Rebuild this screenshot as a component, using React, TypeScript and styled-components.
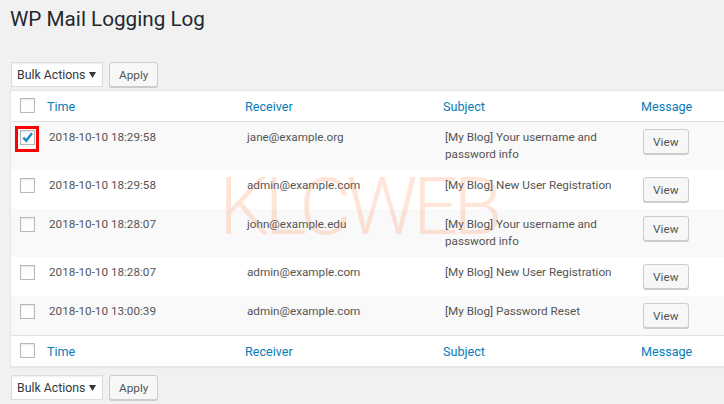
import React from 'react';
import styled, { createGlobalStyle } from 'styled-components';

const GlobalStyle = createGlobalStyle`
  html, body {
    margin: 0;
    padding: 0;
    background: #f1f1f1;
    overflow: hidden;
  }
  body {
    font-family: Roboto, "Liberation Sans", sans-serif;
    color: #555;
  }
`;

const Page = styled.div`
  box-sizing: border-box;
  width: 724px;
  height: 404px;
  padding: 5px 0 0 10px;
`;

const Title = styled.h1`
  margin: 0;
  font-size: 20.7px;
  line-height: 29px;
  font-weight: 400;
  color: #23282d;
`;

const TableNav = styled.div<{ top?: boolean }>`
  display: flex;
  gap: 6px;
  margin: ${({ top }) => (top ? '28px 0 3px 1px' : '8px 0 0 1px')};
`;

const Select = styled.div`
  box-sizing: border-box;
  display: flex;
  align-items: center;
  justify-content: space-between;
  width: 92px;
  height: 25px;
  padding: 0 6px 0 5px;
  background: #fff;
  border: 1px solid #ddd;
  box-shadow: inset 0 1px 2px rgba(0, 0, 0, 0.07);
  font-size: 12.3px;
  color: #32373c;
`;

const Button = styled.button`
  box-sizing: border-box;
  display: block;
  height: 25px;
  padding: 0 9px;
  background: #f7f7f7;
  border: 1px solid #ccc;
  border-radius: 3px;
  box-shadow: 0 1px 0 #ccc;
  font-family: Roboto, "Liberation Sans", sans-serif;
  font-size: 11.8px;
  color: #555;
  cursor: pointer;
`;

const Table = styled.div`
  position: relative;
  width: 730px;
  background: #fff;
  border: 1px solid #e5e5e5;
  box-shadow: 0 1px 1px rgba(0, 0, 0, 0.04);
  overflow: hidden;
`;

const Row = styled.div<{ striped?: boolean; head?: boolean; foot?: boolean }>`
  display: grid;
  grid-template-columns: 26px 198px 198px 198px 1fr;
  background: ${({ striped }) => (striped ? '#f9f9f9' : '#fff')};
  border-bottom: ${({ head }) => (head ? '1px solid #e1e1e1' : 'none')};
  border-top: ${({ foot }) => (foot ? '1px solid #e1e1e1' : 'none')};
`;

const Cell = styled.div<{ head?: boolean }>`
  position: relative;
  padding: ${({ head }) => (head ? '7px 10px 6px 10px' : '7px 10px 7px 12px')};
  font-size: ${({ head }) => (head ? '12.6px' : '11.7px')};
  line-height: 17px;
  color: ${({ head }) => (head ? '#0a7cb8' : '#555')};
`;

const CheckCell = styled.div<{ head?: boolean }>`
  position: relative;
  padding: ${({ head }) => (head ? '7px' : '8px')} 0 0 9px;
`;

const Box = styled.span`
  box-sizing: border-box;
  display: flex;
  align-items: center;
  justify-content: center;
  width: 15px;
  height: 15px;
  background: #fff;
  border: 1px solid #b4b9be;
  box-shadow: inset 0 1px 2px rgba(0, 0, 0, 0.1);
`;

const Highlight = styled.span`
  position: absolute;
  left: 4px;
  top: 4px;
  width: 24px;
  height: 26px;
  box-sizing: border-box;
  border: 3px solid #f00;
`;

const Subject = styled.div`
  max-width: 175px;
`;

const Watermark = styled.div`
  position: absolute;
  left: 208px;
  top: 66px;
  font-size: 80px;
  line-height: 100px;
  font-weight: 300;
  letter-spacing: -5px;
  color: rgba(255, 120, 60, 0.2);
  pointer-events: none;
  white-space: nowrap;
`;

const logs = [
  { time: '2018-10-10 18:29:58', to: 'jane@example.org', subject: '[My Blog] Your username and password info', checked: true },
  { time: '2018-10-10 18:29:58', to: 'admin@example.com', subject: '[My Blog] New User Registration' },
  { time: '2018-10-10 18:28:07', to: 'john@example.edu', subject: '[My Blog] Your username and password info' },
  { time: '2018-10-10 18:28:07', to: 'admin@example.com', subject: '[My Blog] New User Registration' },
  { time: '2018-10-10 13:00:39', to: 'admin@example.com', subject: '[My Blog] Password Reset' },
];

const Check = ({ checked }: { checked?: boolean }) => (
  <Box>
    {checked && (
      <svg width="13" height="13" viewBox="0 0 13 13">
        <path d="M2.3 6.6 L5.2 9.6 L11 2.2" fill="none" stroke="#1e8cbe" strokeWidth="2.4" />
      </svg>
    )}
  </Box>
);

const Nav = ({ top }: { top?: boolean }) => (
  <TableNav top={top}>
    <Select>
      Bulk Actions
      <svg width="7" height="6" viewBox="0 0 7 6">
        <path d="M0 0 H7 L3.5 6 Z" fill="#32373c" />
      </svg>
    </Select>
    <Button>Apply</Button>
  </TableNav>
);

const HeadRow = ({ foot }: { foot?: boolean }) => (
  <Row head={!foot} foot={foot}>
    <CheckCell head>
      <Check />
    </CheckCell>
    <Cell head>Time</Cell>
    <Cell head>Receiver</Cell>
    <Cell head>Subject</Cell>
    <Cell head>Message</Cell>
  </Row>
);

export default function App() {
  return (
    <Page>
      <GlobalStyle />
      <Title>WP Mail Logging Log</Title>
      <Nav top />
      <Table>
        <HeadRow />
        {logs.map((log, i) => (
          <Row key={i} striped={i % 2 === 0}>
            <CheckCell>
              <Check checked={log.checked} />
              {log.checked && <Highlight />}
            </CheckCell>
            <Cell>{log.time}</Cell>
            <Cell>{log.to}</Cell>
            <Cell>
              <Subject>{log.subject}</Subject>
            </Cell>
            <Cell>
              <Button>View</Button>
            </Cell>
          </Row>
        ))}
        <HeadRow foot />
        <Watermark>KLCWEB</Watermark>
      </Table>
      <Nav />
    </Page>
  );
}
